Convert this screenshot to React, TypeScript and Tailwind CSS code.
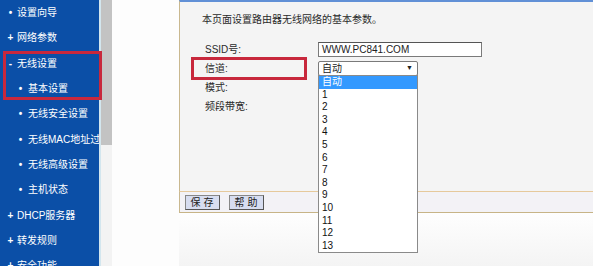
const menu = [
  { mark: '•', label: '设置向导', sub: false },
  { mark: '+', label: '网络参数', sub: false },
  { mark: '-', label: '无线设置', sub: false },
  { mark: '•', label: '基本设置', sub: true },
  { mark: '•', label: '无线安全设置', sub: true },
  { mark: '•', label: '无线MAC地址过滤', sub: true },
  { mark: '•', label: '无线高级设置', sub: true },
  { mark: '•', label: '主机状态', sub: true },
  { mark: '+', label: 'DHCP服务器', sub: false },
  { mark: '+', label: '转发规则', sub: false },
  { mark: '+', label: '安全功能', sub: false },
];

const channels = ['1', '2', '3', '4', '5', '6', '7', '8', '9', '10', '11', '12', '13'];

export default function App() {
  return (
    <div
      className="relative flex w-[593px] h-[266px] overflow-hidden bg-white text-[10px]"
      style={{ fontFamily: '"Liberation Sans", "Noto Sans CJK SC", sans-serif' }}
    >
      {/* SIDEBAR */}
      <nav className="w-[99px] shrink-0 bg-[#0b4fa7] text-white overflow-hidden">
        {menu.map((m) => (
          <div
            key={m.label}
            className={`flex items-center h-[25.3px] whitespace-nowrap ${m.sub ? 'pl-[16px]' : 'pl-[6px]'}`}
          >
            <span className="w-[9px] shrink-0 text-center font-bold">{m.mark}</span>
            <span className={`shrink-0 ${m.sub ? 'ml-[3px]' : 'ml-[2px]'}`}>{m.label}</span>
          </div>
        ))}
      </nav>
      <div className="w-[2px] shrink-0 bg-[#d3e6ee]" />
      <div className="w-[11px] shrink-0 bg-[#f3f3f3]">
        <div className="h-[145px] bg-[#c3c3c3]" />
      </div>
      <div className="w-[67px] shrink-0 bg-[#fdfdfd]" />

      {/* MAIN PANEL */}
      <main className="flex-1 flex flex-col text-[#2a2a2a]">
        <div className="border-l border-[#c9b88f] border-t-2 border-t-[#6190d6] bg-[#f4f4f4] h-[191px] pl-[22px] pt-[12px]">
          <p className="leading-[12px]">本页面设置路由器无线网络的基本参数。</p>
          <div className="mt-[14px] ml-[3px] grid grid-cols-[113px_auto]">
            <div className="h-[19px] flex items-center">SSID号:</div>
            <div className="h-[19px] flex items-center">
              <div className="w-[164px] h-[15px] bg-white border border-[#7a7a7a] border-t-[#555] pl-[3px] text-[10px] leading-[13px] text-[#222]">
                WWW.PC841.COM
              </div>
            </div>

            <div className="relative h-[19px] flex items-center">
              信道:
              <div className="absolute left-[-14px] top-[-2px] w-[116px] h-[23px] border-[3px] border-[#c8283c]" />
            </div>
            <div className="relative h-[19px] flex items-center">
              <div className="relative w-[100px] h-[15px] bg-white border border-[#7a7a7a] rounded-[2px] pl-[3px] pr-[4px] flex items-center justify-between text-[#222]">
                <span>自动</span>
                <span className="text-[7px]">▼</span>
                <div className="absolute left-[-1px] top-[13px] w-[100px] bg-white border border-[#8a8a8a] z-10 text-[#111]">
                  <div className="h-[12.6px] leading-[12.6px] pl-[3px] bg-[#3399ff] text-white">自动</div>
                  {channels.map((c) => (
                    <div key={c} className="h-[12.6px] leading-[12.6px] pl-[3px]">
                      {c}
                    </div>
                  ))}
                </div>
              </div>
            </div>

            <div className="h-[19px] flex items-center">模式:</div>
            <div className="h-[19px]" />
            <div className="h-[19px] flex items-center">频段带宽:</div>
            <div className="h-[19px]" />
          </div>
        </div>
        <div className="border-l border-[#c9b88f] border-t border-t-[#e6c99c] border-b border-b-[#c7b487] bg-[#f3f2f6] h-[22px] pl-[5px] flex items-center gap-[9px]">
          <button className="w-[35px] h-[15px] bg-[#d7ddf0] border border-[#555] border-t-[#888] border-l-[#888] text-[10px] leading-[13px] tracking-[3px] text-[#222] pl-[2px]">
            保存
          </button>
          <button className="w-[35px] h-[15px] bg-[#d7ddf0] border border-[#555] border-t-[#888] border-l-[#888] text-[10px] leading-[13px] tracking-[3px] text-[#222] pl-[2px]">
            帮助
          </button>
        </div>
        <div className="flex-1 bg-gradient-to-b from-[#fefefe] to-[#f4f4f4]" />
      </main>

      {/* annotation box in sidebar */}
      <div className="absolute left-[3px] top-[51px] w-[99px] h-[49px] border-[3px] border-[#c8283c]" />
    </div>
  );
}
